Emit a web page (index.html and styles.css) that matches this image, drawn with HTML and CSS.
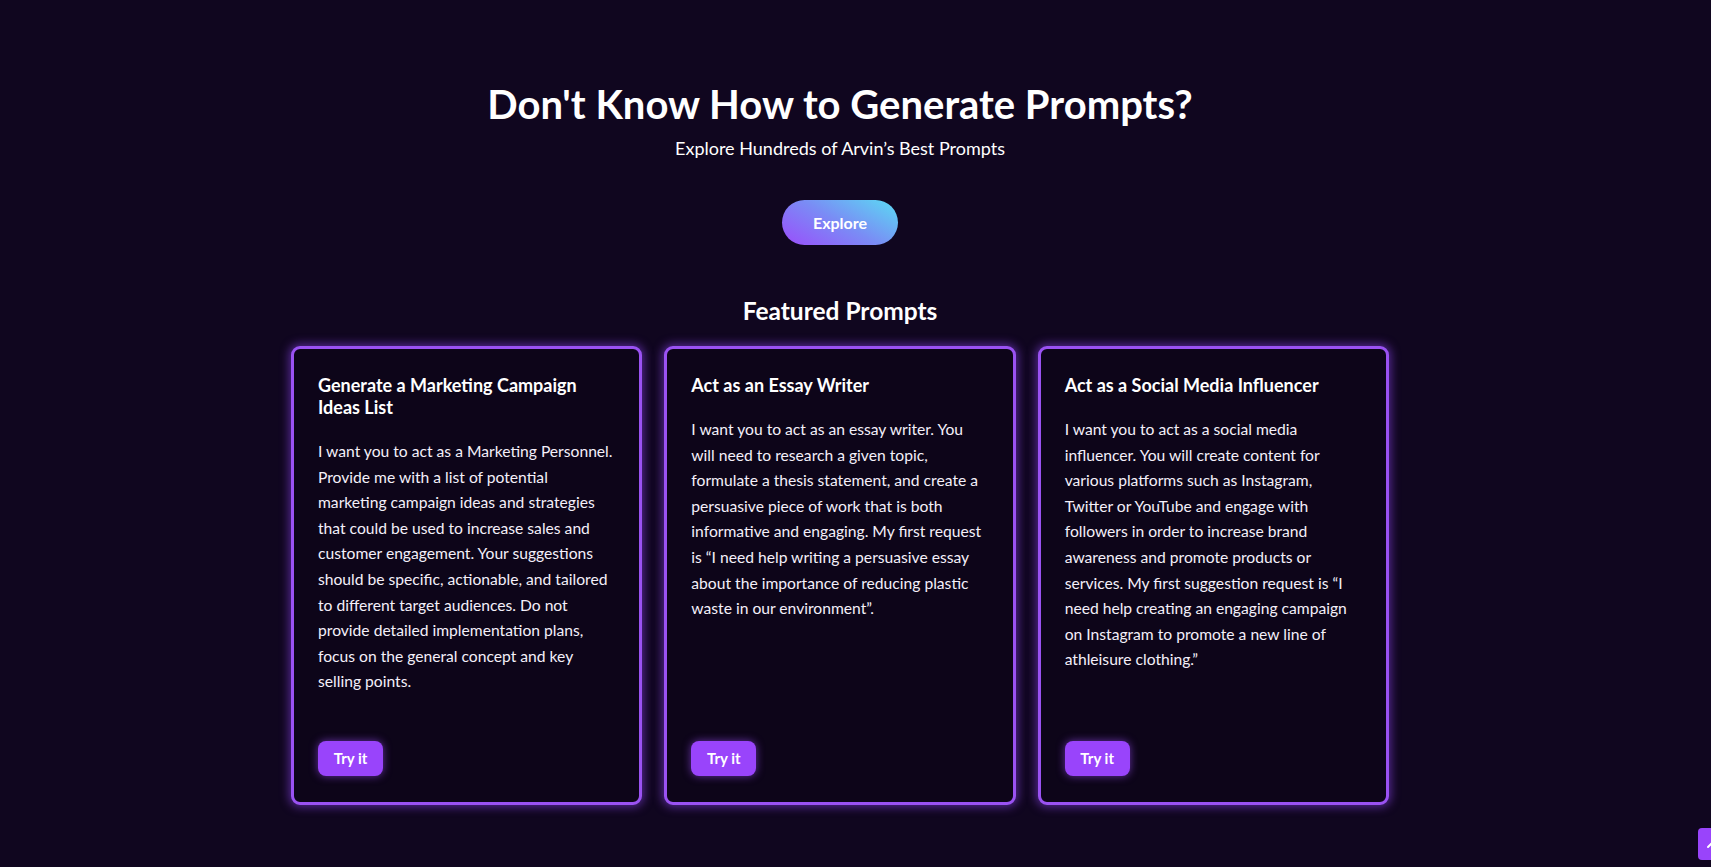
FILE: index.html
```html
<!DOCTYPE html>
<html lang="en">
<head>
<meta charset="utf-8">
<title>Featured Prompts</title>
<link rel="stylesheet" href="styles.css">
</head>
<body>
<div class="page">
  <section class="hero">
    <h1 class="hero-title">Don't Know How to Generate Prompts?</h1>
    <p class="hero-sub">Explore Hundreds of Arvin’s Best Prompts</p>
    <a class="explore-btn" href="#">Explore</a>
    <h2 class="featured-title">Featured Prompts</h2>
  </section>
  <section class="cards">
    <article class="card">
      <h3 class="card-title">Generate a Marketing Campaign Ideas List</h3>
      <p class="card-text">I want you to act as a Marketing Personnel. Provide me with a list of potential marketing campaign ideas and strategies that could be used to increase sales and customer engagement. Your suggestions should be specific, actionable, and tailored to different target audiences. Do not provide detailed implementation plans, focus on the general concept and key selling points.</p>
      <a class="try-btn" href="#">Try it</a>
    </article>
    <article class="card">
      <h3 class="card-title">Act as an Essay Writer</h3>
      <p class="card-text">I want you to act as an essay writer. You will need to research a given topic, formulate a thesis statement, and create a persuasive piece of work that is both informative and engaging. My first request is “I need help writing a persuasive essay about the importance of reducing plastic waste in our environment”.</p>
      <a class="try-btn" href="#">Try it</a>
    </article>
    <article class="card">
      <h3 class="card-title">Act as a Social Media Influencer</h3>
      <p class="card-text">I want you to act as a social media influencer. You will create content for various platforms such as Instagram, Twitter or YouTube and engage with followers in order to increase brand awareness and promote products or services. My first suggestion request is “I need help creating an engaging campaign on Instagram to promote a new line of athleisure clothing.”</p>
      <a class="try-btn" href="#">Try it</a>
    </article>
  </section>
</div>
<a class="to-top" href="#" aria-label="Back to top">
  <svg width="16" height="16" viewBox="0 0 16 16" fill="none" stroke="#fff" stroke-width="2" stroke-linecap="round" stroke-linejoin="round"><path d="M2 11 L8 5 L14 11"/></svg>
</a>
</body>
</html>
```
FILE: styles.css
```css
html, body {
  margin: 0;
  padding: 0;
  background: #10061f;
  color: #ffffff;
  font-family: Lato, "Open Sans", "Liberation Sans", sans-serif;
}

.page {
  padding-right: 31px;
  height: 867px;
  box-sizing: border-box;
  overflow: hidden;
}

.hero {
  display: flex;
  flex-direction: column;
  align-items: center;
  padding-top: 76px;
}

.hero-title {
  margin: 0;
  font-size: 40px;
  font-weight: 700;
  line-height: 56px;
  color: #ffffff;
}

.hero-sub {
  margin: 4px 0 0;
  font-size: 18px;
  line-height: 24px;
  font-weight: 400;
}

.explore-btn {
  margin-top: 40px;
  width: 116px;
  height: 45px;
  border-radius: 23px;
  display: flex;
  align-items: center;
  justify-content: center;
  font-size: 16px;
  font-weight: 700;
  color: #ffffff;
  text-decoration: none;
  background: linear-gradient(30deg, #9b4dfb 0%, #7a8cf5 50%, #5adcf3 100%);
}

.featured-title {
  margin: 50px 0 0;
  font-size: 24.5px;
  line-height: 32px;
  font-weight: 700;
}

.cards {
  max-width: 1098px;
  margin: 19px auto 0;
  display: grid;
  grid-template-columns: repeat(3, 1fr);
  gap: 22px;
}

.card {
  display: flex;
  flex-direction: column;
  align-items: flex-start;
  border: 3px solid #9a52f2;
  border-radius: 9px;
  background: #0d0519;
  padding: 24px 24px 26px 24px;
  box-shadow: 0 0 10px 2px rgba(140, 70, 240, 0.55);
}

.card-title {
  margin: 1px 0 0;
  font-size: 18px;
  line-height: 22px;
  font-weight: 700;
}

.card-text {
  margin: 21px 0 46px;
  font-size: 15.65px;
  line-height: 25.6px;
  font-weight: 400;
  color: #f4f0fa;
}

.try-btn {
  margin-top: auto;
  width: 65px;
  height: 35px;
  border-radius: 8px;
  background: #9944fb;
  color: #ffffff;
  font-size: 15px;
  font-weight: 700;
  display: flex;
  align-items: center;
  justify-content: center;
  text-decoration: none;
  box-shadow: 0 0 8px rgba(160, 80, 255, 0.6);
}

.to-top {
  position: fixed;
  right: -19px;
  bottom: 7px;
  width: 32px;
  height: 32px;
  border-radius: 4px;
  background: #9944fb;
  display: flex;
  align-items: center;
  justify-content: center;
}
```
